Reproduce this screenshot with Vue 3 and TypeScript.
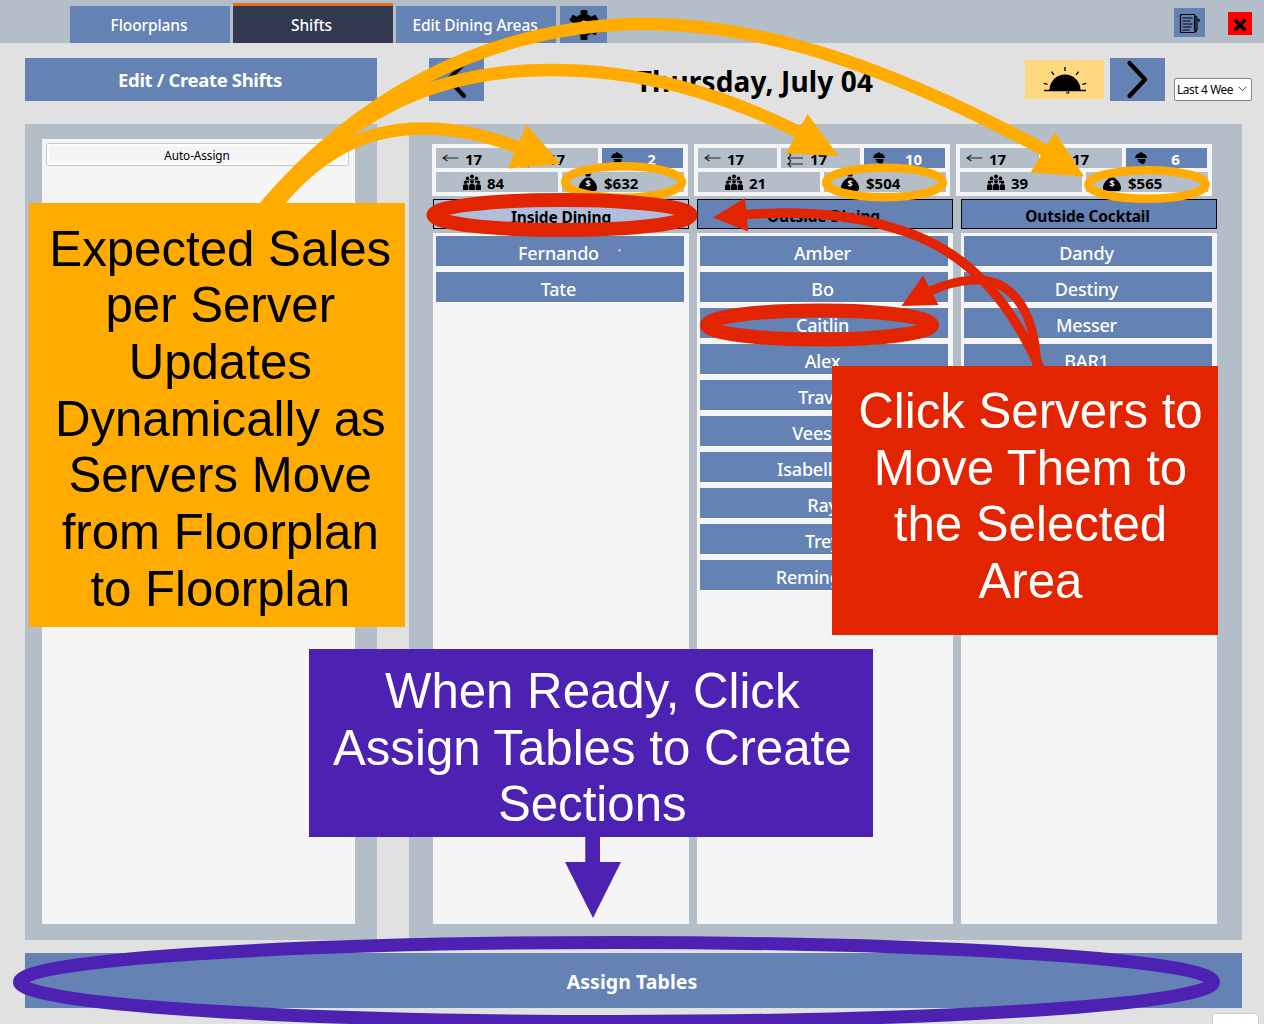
<script setup lang="ts">
interface Area {
  name: string
  selected: boolean
  servers: string[]
  perServer: string
  lastPerServer: string
  serverCount: number
  covers: number
  sales: string
}

const areas: Area[] = [
  { name: 'Inside Dining', selected: true, servers: ['Fernando', 'Tate'], perServer: '17', lastPerServer: '17', serverCount: 2, covers: 84, sales: '$632' },
  { name: 'Outside Dining', selected: false, servers: ['Amber', 'Bo', 'Caitlin', 'Alex', 'Travis', 'Veesna', 'Isabella M.', 'Ray', 'Trey', 'Remington'], perServer: '17', lastPerServer: '17', serverCount: 10, covers: 21, sales: '$504' },
  { name: 'Outside Cocktail', selected: false, servers: ['Dandy', 'Destiny', 'Messer', 'BAR1'], perServer: '17', lastPerServer: '17', serverCount: 6, covers: 39, sales: '$565' },
]
const rays = [-75, -38, 0, 38, 75]
const teeth = [0, 60, 120, 180, 240, 300]
</script>

<template>
  <div class="app">
    <header class="topbar">
      <nav class="tabs">
        <button class="tab">Floorplans</button>
        <button class="tab active">Shifts</button>
        <button class="tab areas-tab">Edit Dining Areas</button>
        <button class="tab gear">
          <svg width="30" height="32" viewBox="-15 -16 30 32">
            <circle r="11" />
            <rect v-for="a in teeth" :key="a" x="-3.4" y="-15" width="6.8" height="8" rx="1" :transform="`rotate(${a})`" />
            <circle r="4.500" fill="#b4bec8" />
          </svg>
        </button>
      </nav>
      <div class="window-tools">
        <button class="log">
          <svg width="21" height="21" viewBox="0 0 21 21" fill="none" stroke="#000" stroke-width="1.200">
            <path d="M2.500 1.500H15.500Q16 1.500 16 3V18Q16 19.500 15 19.500H2.500Q1.500 19.500 1.500 18.500V2.500Q1.500 1.500 2.500 1.500zM3.500 5h10M3.500 8h8M3.500 11h10M3.500 14h9M3.500 17h7M15.500 5v11l1.300 2.500L18 16V5c0-2-2.500-2-2.500 0zM18 6.500h2v2.500" />
          </svg>
        </button>
        <button class="close">
          <svg width="14" height="14" viewBox="0 0 14 14" stroke="#000" stroke-width="3.400"><path d="M1.800 1.800l10.400 10.400M12.200 1.800l-10.400 10.400" /></svg>
        </button>
      </div>
    </header>

    <div class="toolbar">
      <button class="edit-shifts"><span>Edit / Create Shifts</span></button>
      <button class="step">
        <svg width="55" height="43" viewBox="0 0 55 43" class="chev"><path d="M35.500 5L19.500 21.500L35 38" /></svg>
      </button>
      <h1><span>Thursday, July 04</span></h1>
      <button class="sun">
        <svg width="48" height="30" viewBox="-24 -22 48 30" stroke="#000" fill="#000">
          <path d="M-15.500 1a15 15 0 0 1 31 0z" stroke="none" />
          <path d="M-21 1.500H21" stroke-width="1.500" />
          <path d="M1 4h2.500v-2" stroke-width="1.200" fill="none" />
          <path v-for="a in rays" :key="a" d="M0 -18v-4" stroke-width="1.400" :transform="`rotate(${a})`" />
        </svg>
      </button>
      <button class="step">
        <svg width="55" height="43" viewBox="0 0 55 43" class="chev"><path d="M19.500 5L35 21.500L19.500 38" /></svg>
      </button>
      <div class="period">
        <span>Last 4 Wee</span>
        <svg width="9" height="6" viewBox="0 0 9 6" fill="none" stroke="#444"><path d="M.5 .7l4 4l4-4" /></svg>
      </div>
    </div>

    <main class="panels">
      <section class="pool">
        <div class="pool-list"><button class="auto"><span>Auto-Assign</span></button></div>
      </section>
      <section class="board">
        <div class="stats-row">
          <div v-for="area in areas" :key="area.name" class="stats">
            <div class="line">
              <div class="cell narrow">
                <svg width="17" height="8" viewBox="0 0 17 8" class="arr"><path d="M16.500 4H1M5.500 1L1 4l4.500 3" /></svg>
                <b class="n1">{{ area.perServer }}</b>
              </div>
              <div class="cell narrow">
                <svg width="17" height="20" viewBox="0 0 17 20" class="arr"><path d="M16 4H1M4 1L1 4l3 3M16 10H1M4 7L1 10l3 3M16 16H1M4 13L1 16l3 3" /></svg>
                <b class="n2">{{ area.lastPerServer }}</b>
              </div>
              <div class="cell count">
                <svg width="12" height="12" viewBox="0 0 12 12"><path d="M0 6C.3 3 2.500 1.300 5.300 1V0h1.400v1C9.500 1.300 11.700 3 12 6zM1.500 7h9v2L9 11.700H6.500L2 8.800h3z" /></svg>
                <b>{{ area.serverCount }}</b>
              </div>
            </div>
            <div class="line">
              <div class="cell half covers">
                <svg width="18" height="16" viewBox="0 0 18 16">
                  <circle cx="9" cy="2.400" r="2" /><circle cx="4.500" cy="4.400" r="1.800" /><circle cx="13.500" cy="4.400" r="1.800" />
                  <circle cx="2.500" cy="8.300" r="1.700" /><circle cx="9" cy="7.800" r="1.900" /><circle cx="15.500" cy="8.300" r="1.700" />
                  <path d="M0 16v-4q0-1.700 1.700-1.700h2q1.700 0 1.700 1.700v4zM6.100 16v-4.200q0-1.700 1.700-1.700h2.400q1.700 0 1.700 1.700V16zM12.600 16v-4q0-1.700 1.700-1.700h2q1.700 0 1.700 1.700v4zM6.500 5.500q2.500-1.700 5 0v1.200q-2.500-2.200-5 0zM3 6.700h3l-.5 2.800zM12 6.700h3l-2.500 2.800z" />
                </svg>
                <b>{{ area.covers }}</b>
              </div>
              <div class="cell half sales">
                <svg width="18" height="18" viewBox="0 0 18 18">
                  <path d="M5.500 0l2 1L9 .2l1.500.8 2-1-1.500 3.500H7zM7 4.500h4C15 7 18 11 18 15q0 3-2.500 3h-13Q0 18 0 15C0 11 3 7 7 4.500z" />
                  <text x="9" y="14.300" text-anchor="middle" class="dollar">$</text>
                </svg>
                <b>{{ area.sales }}</b>
              </div>
            </div>
          </div>
        </div>
        <div class="columns">
          <div v-for="area in areas" :key="area.name" class="column">
            <button class="area-name" :class="{ selected: area.selected }"><span>{{ area.name }}</span></button>
            <div class="servers">
              <button v-for="s in area.servers" :key="s" class="server">{{ s }}</button>
            </div>
          </div>
        </div>
      </section>
    </main>

    <button class="assign"><span>Assign Tables</span></button>
    <div class="corner"></div>

    <svg class="marks" width="1264" height="1024" viewBox="0 0 1264 1024" fill="none">
      <rect x="618.500" y="249.500" width="2" height="2" fill="#e8ee90" />
      <g stroke="#ffab00" stroke-width="12.500">
        <path d="M270 212C315 155 362 128.500 423 128.500C460 128.500 490 137 520 148" />
        <path d="M266 210C350 108 440 70 550 70C640 70 720 92 805 135" />
        <path d="M262 210C350 105 480 24 645 24C770 24 900 72 1048 152" />
      </g>
      <path fill="#ffab00" d="M526.500 124.500L560.500 164L508 168.500zM807.500 114L838.500 156L786 153.500zM1055 132L1084 176.500L1030.500 172.500z" />
      <g stroke="#ffab00" stroke-width="8.500">
        <ellipse cx="623.500" cy="182" rx="58.300" ry="15.700" />
        <ellipse cx="884.500" cy="182.500" rx="58.300" ry="14.700" />
        <ellipse cx="1147" cy="184.500" rx="58.500" ry="14.300" />
      </g>
      <g stroke="#e22400">
        <ellipse cx="562" cy="215" rx="128.500" ry="15" stroke-width="14" />
        <ellipse cx="819.500" cy="325" rx="112.500" ry="14.500" stroke-width="14" />
        <path d="M742 215C800 210 850 215 890 227C950 243 1000 280 1040 368" stroke-width="9.500" />
        <path d="M930 291C960 278 985 277 1000 285C1025 298 1036 330 1037 368" stroke-width="9" />
      </g>
      <path fill="#e22400" d="M713 217.500L745 198L748 231.500zM901.500 306L923 275.500L938.500 305z" />
      <ellipse cx="616.500" cy="982" rx="597" ry="39.500" stroke="#4d22b2" stroke-width="13" />
      <path fill="#4d22b2" d="M585.300 830H600V862H621L593 918L565 862H585.300z" />
    </svg>
    <aside class="note sales-note">Expected Sales<br>per Server<br>Updates<br>Dynamically as<br>Servers Move<br>from Floorplan<br>to Floorplan</aside>
    <aside class="note move-note">Click Servers to<br>Move Them to<br>the Selected<br>Area</aside>
    <aside class="note ready-note">When Ready, Click<br>Assign Tables to Create<br>Sections</aside>
  </div>
</template>

<style>
body { margin: 0; background: #e1e1e1; }
</style>

<style scoped>
.app { position: relative; width: 1264px; height: 1024px; overflow: hidden; background: #e1e1e1; font-family: "Noto Sans", "Open Sans", sans-serif; display: flex; flex-direction: column; }
.app * { box-sizing: border-box; }
button { border: 0; padding: 0; margin: 0; font: inherit; display: flex; align-items: center; justify-content: center; flex: none; white-space: nowrap; }
svg { display: block; flex: none; }
.topbar { height: 43px; flex: none; background: #b4bec8; display: flex; justify-content: space-between; padding-left: 70px; padding-right: 12px; }
.tabs { display: flex; gap: 3px; align-items: flex-end; }
.tab { width: 160px; height: 37px; background: #6482b4; color: #fff; font-size: 15.500px; font-weight: 500; letter-spacing: -.1px; padding-top: 1px; padding-right: 2px; }
.tab.active { height: 40px; background: #32384f; border-top: 3px solid #e86c1a; padding-right: 3px; }
.tab.gear { width: 47px; margin-left: 1px; padding: 0; }
.window-tools { display: flex; gap: 23px; }
.log { width: 31px; height: 29px; margin-top: 8px; background: #6482b4; padding: 1px 0 0 0; }
.close { width: 24px; height: 23px; margin-top: 12px; background: #f00; padding-top: 2px; }
.toolbar { height: 81px; flex: none; display: flex; align-items: flex-start; padding: 15px 12px 0 25px; }
.edit-shifts { width: 352px; height: 43px; margin-right: 52px; background: #6482b4; color: #fff; font-size: 18.500px; font-weight: 700; letter-spacing: -.35px; padding-right: 2px; }
.step { width: 55px; height: 43px; background: #6482b4; }
.chev { fill: none; stroke: #000; stroke-width: 4.300; stroke-linecap: round; stroke-linejoin: round; }
h1 { margin: 2px 0 0; width: 541px; height: 43px; text-align: center; font-size: 28px; line-height: 42px; letter-spacing: .15px; white-space: nowrap; }
.sun { width: 79px; height: 39px; margin: 2px 6px 0 0; background: #ffd77f; padding-top: 5px; }
.period { width: 78px; height: 23px; margin: 20px 0 0 9px; background: #fff; border: 1px solid #848484; border-radius: 2px; display: flex; align-items: center; justify-content: space-between; padding: 0 4px 2px 2px; font-size: 11.800px; letter-spacing: -.35px; white-space: nowrap; }
.panels { display: flex; gap: 32px; height: 816px; flex: none; padding: 0 22px 0 25px; }
.pool { width: 352px; background: #b4bec8; padding: 15px 22px 16px 17px; display: flex; }
.pool-list { flex: 1; background: #f5f5f5; padding: 4px 6px 0 4px; }
.auto { width: 303px; height: 23px; border: 1px solid #c8c8c8; border-radius: 3px; background: #f5f5f5; box-shadow: inset 0 0 0 2px #fdfdfd; font-size: 11.800px; letter-spacing: -.1px; color: #000; padding-right: 1px; }
.board { width: 833px; background: #b4bec8; padding: 20px 25px 16px 23px; display: flex; flex-direction: column; }
.stats-row { display: flex; gap: 6px; }
.stats { width: 256px; height: 52px; background: #f5f5f5; padding: 4px; display: flex; flex-direction: column; gap: 4px; }
.line { display: flex; gap: 4px; }
.cell { height: 20px; background: #b4bec8; display: flex; align-items: center; font-size: 15px; flex: none; }
.cell b { line-height: 18px; padding-top: 2px; }
.narrow { width: 79px; padding-left: 6px; }
.arr { fill: none; stroke: #222; stroke-width: 1.200; }
.n1 { margin-left: 6px; }
.n2 { margin-left: 6px; }
.count { width: 81px; background: #6482b4; color: #fff; padding-left: 9px; }
.count b { flex: 1; text-align: center; padding-right: 7px; padding-left: 4px; }
.half { width: 122px; }
.covers { padding-left: 27px; gap: 6px; }
.sales { padding-left: 17px; gap: 7px; }
.dollar { font-size: 9px; font-weight: 700; fill: #f5f5f5; }
.columns { margin-top: 3px; margin-left: 1px; display: flex; gap: 8px; flex: 1; }
.column { width: 256px; display: flex; flex-direction: column; gap: 4px; }
.area-name { height: 30px; border: 1px solid #000; background: #6482b4; color: #000; font-weight: 700; font-size: 15.500px; letter-spacing: -.15px; padding-top: 3px; padding-right: 3px; }
.area-name.selected { background: #b0bedc; padding-top: 5px; padding-right: 0; }
.servers { flex: 1; background: #f5f5f5; padding: 3px 5px 0 3px; display: flex; flex-direction: column; gap: 6px; }
.server { height: 30px; background: #6482b4; color: #fff; font-size: 18px; font-weight: 500; letter-spacing: -.2px; padding-top: 4px; padding-right: 3px; }
.assign { width: 1217px; height: 55px; margin: 13px 0 0 25px; background: #6482b4; color: #fff; font-size: 19.500px; font-weight: 700; letter-spacing: .05px; padding-top: 1px; padding-right: 3px; }
.corner { width: 47px; height: 20px; margin: 5px 0 0 1212px; flex: none; background: #fff; border: 1px solid #ccc; border-radius: 4px; }
.marks { position: absolute; left: 0; top: 0; }
.note { position: absolute; text-align: center; white-space: nowrap; color: #fff; font-family: "Liberation Sans", sans-serif; font-size: 49.200px; line-height: 56.700px; }
.sales-note { left: 29px; top: 202.500px; width: 375.500px; height: 424.500px; padding: 18px 0 0 7px; background: #ffab00; color: #000; }
.move-note { left: 832px; top: 366px; width: 386px; height: 269px; padding: 17px 0 0 11px; background: #e22400; }
.ready-note { left: 309px; top: 649px; width: 563.500px; height: 187.500px; padding: 14px 0 0 3px; background: #4d22b2; }
</style>
